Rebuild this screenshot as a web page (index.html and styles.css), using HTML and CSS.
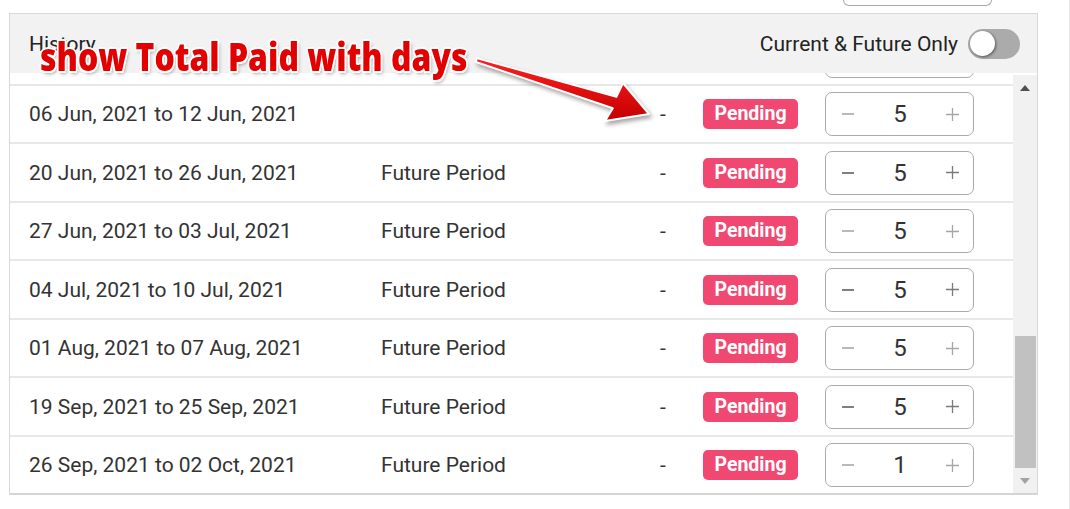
FILE: index.html
```html
<!DOCTYPE html>
<html>
<head>
    <title>Leave History</title>
    <link rel="stylesheet" href="styles.css">
</head>
<body>
    <div class="screen">
        <div class="stub"></div>
        <div class="panel">
            <div class="panel-head">
                <span class="title">History</span>
                <label class="filter">
                    <span>Current &amp; Future Only</span>
                    <span class="switch"><span class="knob"></span></span>
                </label>
            </div>
            <div class="panel-body">
                <div class="viewport">
                    <div class="rows">
                        <!-- scrolled out of view, only its bottom shows -->
                        <div class="row">
                            <span class="date">30 May, 2021 to 05 Jun, 2021</span>
                            <span class="period">Current Period</span>
                            <span class="paid">-</span>
                            <span class="badge">Pending</span>
                            <div class="stepper">
                                <svg class="minus" width="12" height="12" viewBox="0 0 12 12"><path d="M0 6H12"/></svg>
                                <span class="qty">5</span>
                                <svg class="plus" width="13" height="13" viewBox="0 0 13 13"><path d="M6.5 0V13M0 6.5H13"/></svg>
                            </div>
                        </div>
                        <div class="row">
                            <span class="date">06 Jun, 2021 to 12 Jun, 2021</span>
                            <span class="period"></span>
                            <span class="paid">-</span>
                            <span class="badge">Pending</span>
                            <div class="stepper">
                                <svg class="minus" width="12" height="12" viewBox="0 0 12 12"><path d="M0 6H12"/></svg>
                                <span class="qty">5</span>
                                <svg class="plus" width="13" height="13" viewBox="0 0 13 13"><path d="M6.5 0V13M0 6.5H13"/></svg>
                            </div>
                        </div>
                        <div class="row">
                            <span class="date">20 Jun, 2021 to 26 Jun, 2021</span>
                            <span class="period">Future Period</span>
                            <span class="paid">-</span>
                            <span class="badge">Pending</span>
                            <div class="stepper active">
                                <svg class="minus" width="12" height="12" viewBox="0 0 12 12"><path d="M0 6H12"/></svg>
                                <span class="qty">5</span>
                                <svg class="plus" width="13" height="13" viewBox="0 0 13 13"><path d="M6.5 0V13M0 6.5H13"/></svg>
                            </div>
                        </div>
                        <div class="row">
                            <span class="date">27 Jun, 2021 to 03 Jul, 2021</span>
                            <span class="period">Future Period</span>
                            <span class="paid">-</span>
                            <span class="badge">Pending</span>
                            <div class="stepper">
                                <svg class="minus" width="12" height="12" viewBox="0 0 12 12"><path d="M0 6H12"/></svg>
                                <span class="qty">5</span>
                                <svg class="plus" width="13" height="13" viewBox="0 0 13 13"><path d="M6.5 0V13M0 6.5H13"/></svg>
                            </div>
                        </div>
                        <div class="row">
                            <span class="date">04 Jul, 2021 to 10 Jul, 2021</span>
                            <span class="period">Future Period</span>
                            <span class="paid">-</span>
                            <span class="badge">Pending</span>
                            <div class="stepper active">
                                <svg class="minus" width="12" height="12" viewBox="0 0 12 12"><path d="M0 6H12"/></svg>
                                <span class="qty">5</span>
                                <svg class="plus" width="13" height="13" viewBox="0 0 13 13"><path d="M6.5 0V13M0 6.5H13"/></svg>
                            </div>
                        </div>
                        <div class="row">
                            <span class="date">01 Aug, 2021 to 07 Aug, 2021</span>
                            <span class="period">Future Period</span>
                            <span class="paid">-</span>
                            <span class="badge">Pending</span>
                            <div class="stepper">
                                <svg class="minus" width="12" height="12" viewBox="0 0 12 12"><path d="M0 6H12"/></svg>
                                <span class="qty">5</span>
                                <svg class="plus" width="13" height="13" viewBox="0 0 13 13"><path d="M6.5 0V13M0 6.5H13"/></svg>
                            </div>
                        </div>
                        <div class="row">
                            <span class="date">19 Sep, 2021 to 25 Sep, 2021</span>
                            <span class="period">Future Period</span>
                            <span class="paid">-</span>
                            <span class="badge">Pending</span>
                            <div class="stepper active">
                                <svg class="minus" width="12" height="12" viewBox="0 0 12 12"><path d="M0 6H12"/></svg>
                                <span class="qty">5</span>
                                <svg class="plus" width="13" height="13" viewBox="0 0 13 13"><path d="M6.5 0V13M0 6.5H13"/></svg>
                            </div>
                        </div>
                        <div class="row">
                            <span class="date">26 Sep, 2021 to 02 Oct, 2021</span>
                            <span class="period">Future Period</span>
                            <span class="paid">-</span>
                            <span class="badge">Pending</span>
                            <div class="stepper">
                                <svg class="minus" width="12" height="12" viewBox="0 0 12 12"><path d="M0 6H12"/></svg>
                                <span class="qty">1</span>
                                <svg class="plus" width="13" height="13" viewBox="0 0 13 13"><path d="M6.5 0V13M0 6.5H13"/></svg>
                            </div>
                        </div>
                    </div>
                </div>
                <div class="scrollbar">
                    <span class="sb-btn"><span class="arrow up"></span></span>
                    <span class="sb-space"></span>
                    <span class="thumb"></span>
                    <span class="sb-btn"><span class="arrow down"></span></span>
                </div>
            </div>
        </div>

        <!-- screenshot annotation -->
        <div class="note">show Total Paid with days</div>
        <svg class="note-arrow" width="1070" height="509" viewBox="0 0 1070 509">
            <defs>
                <linearGradient id="red" x1="0" y1="0" x2="0" y2="1">
                    <stop offset="0" stop-color="#ff1f1f"/>
                    <stop offset="1" stop-color="#c40000"/>
                </linearGradient>
            </defs>
            <polygon points="476.5,58 616.4,96.9 623,83 649,114 605,121 612.8,108.3 476,62" fill="url(#red)" stroke="#fff" stroke-width="2" stroke-linejoin="round"/>
        </svg>
    </div>
</body>
</html>
```

FILE: styles.css
```css
body {
    margin: 0;
    background-color: #fff;
    font-family: Roboto, "Open Sans", sans-serif;
}
.screen {
    position: relative;
    width: 1069px;
    height: 509px;
    border-right: 1px solid #ebebeb;
    overflow: hidden;
}
.stub {
    width: 149px;
    height: 6px;
    box-sizing: border-box;
    margin: 0 0 7px 843px;
    border: 1px solid #aaa;
    border-top: none;
    border-radius: 0 0 7px 7px;
}
.panel {
    width: 1029px;
    margin-left: 9px;
    box-sizing: border-box;
    border: 1px solid #d8d8d8;
    border-bottom: 2px solid #d4d4d4;
}
.panel-head {
    display: flex;
    align-items: center;
    justify-content: space-between;
    height: 59px;
    padding: 0 17px 0 19px;
    background-color: #f2f2f2;
    color: #222;
    font-size: 21px;
}
.filter {
    display: flex;
    align-items: center;
    gap: 10px;
}
.switch {
    display: flex;
    align-items: center;
    width: 52px;
    height: 30px;
    padding-left: 2px;
    box-sizing: border-box;
    border-radius: 15px;
    background-color: #ababab;
}
.knob {
    width: 25px;
    height: 25px;
    border-radius: 50%;
    background-color: #fff;
    box-shadow: 1px 1px 3px rgba(0, 0, 0, 0.5);
}
.panel-body {
    display: flex;
}
.viewport {
    flex: 1;
    height: 420px;
    overflow: hidden;
}
.rows {
    margin-top: -48px;
}
.row {
    display: flex;
    align-items: center;
    height: 58.5px;
    box-sizing: border-box;
    padding-left: 19px;
    padding-top: 1px;
    border-top: 2px solid #e8e8e8;
    color: #333;
    font-size: 21px;
}
.date {
    width: 352px;
}
.period {
    width: 279px;
}
.paid {
    width: 43px;
}
.badge {
    width: 95px;
    height: 30px;
    margin-right: 27px;
    border-radius: 5px;
    background-color: #f04870;
    color: #fff;
    font-size: 19.5px;
    font-weight: bold;
    line-height: 30px;
    text-align: center;
}
.stepper {
    display: flex;
    align-items: center;
    justify-content: space-between;
    width: 149px;
    height: 44px;
    box-sizing: border-box;
    padding: 0 14px 0 16px;
    border: 1px solid #aaa;
    border-radius: 7px;
}
.stepper svg {
    fill: none;
}
.minus {
    stroke: #a0a0a0;
    stroke-width: 1.5;
}
.plus {
    stroke: #a5a5a5;
    stroke-width: 1.3;
}
.stepper.active .minus {
    stroke: #555;
}
.stepper.active .plus {
    stroke: #7a7a7a;
}
.qty {
    color: #333;
    font-size: 24px;
}

/* fake classic scrollbar */
.scrollbar {
    display: flex;
    flex-direction: column;
    width: 24px;
    height: 418px;
    margin-top: 2px;
    background-color: #f1f1f1;
}
.sb-btn {
    display: flex;
    align-items: center;
    justify-content: center;
    height: 25px;
}
.sb-space {
    flex: 1;
}
.thumb {
    height: 132px;
    margin: 0 1px 0 2px;
    background-color: #c1c1c1;
}
.arrow {
    width: 0;
    height: 0;
    border-left: 5.5px solid transparent;
    border-right: 5.5px solid transparent;
}
.arrow.up {
    border-bottom: 6px solid #505050;
}
.arrow.down {
    border-top: 6px solid #a3a3a3;
}

/* annotation on top of the screenshot */
.note {
    position: absolute;
    left: 40px;
    top: 37px;
    color: #e20000;
    font-family: "Open Sans", sans-serif;
    font-size: 38px;
    font-weight: 800;
    line-height: 1;
    white-space: nowrap;
    transform: scaleX(0.84);
    transform-origin: left top;
    text-shadow: -2px 0 #fff, 2px 0 #fff, 0 -2px #fff, 0 2px #fff,
        -1.5px -1.5px #fff, 1.5px 1.5px #fff, -1.5px 1.5px #fff, 1.5px -1.5px #fff,
        2px 3px 4px rgba(0, 0, 0, 0.35);
}
.note-arrow {
    position: absolute;
    left: 0;
    top: 0;
    filter: drop-shadow(2px 3px 2px rgba(0, 0, 0, 0.35));
}
```
